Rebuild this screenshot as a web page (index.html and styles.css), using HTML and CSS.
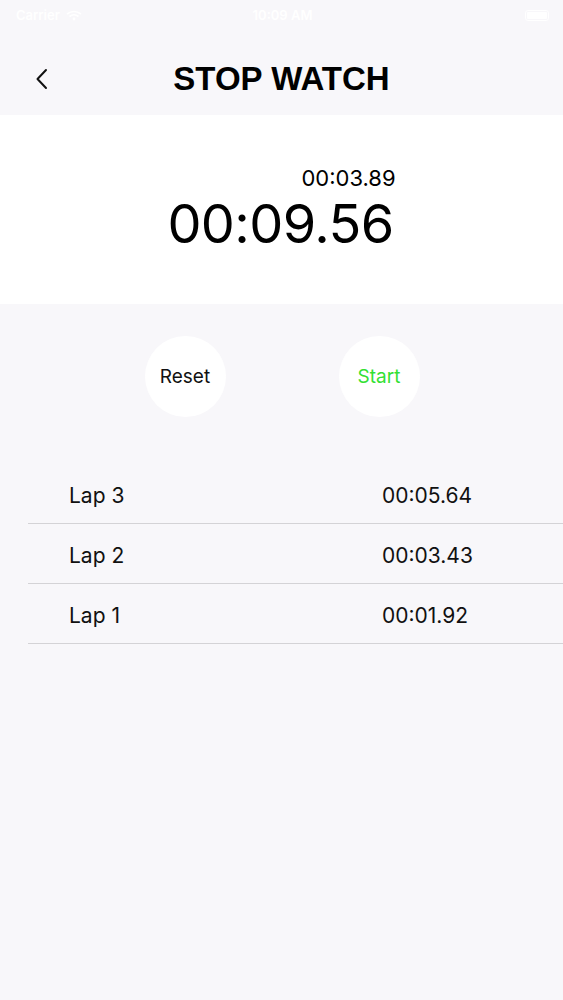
FILE: index.html
```html
<!DOCTYPE html>
<html>
<head>
<meta charset="utf-8">
<link rel="stylesheet" href="styles.css">
</head>
<body>
<div class="screen">
  <div class="status">
    <div class="status-left"><span>Carrier</span>
      <svg class="wifi" width="16" height="11" viewBox="0 0 16 11"><path d="M1 4 Q8 -1 15 4" stroke="#fff" stroke-width="1.6" fill="none"/><path d="M3.5 6.5 Q8 3 12.5 6.5" stroke="#fff" stroke-width="1.6" fill="none"/><circle cx="8" cy="9" r="1.4" fill="#fff"/></svg>
    </div>
    <div class="status-time">10:09 AM</div>
    <div class="battery"><div class="battery-fill"></div></div>
  </div>
  <header class="nav">
    <svg class="back" width="14" height="22" viewBox="0 0 14 22"><path d="M11 2 L2.5 11 L11 20" stroke="#111" stroke-width="2" fill="none" stroke-linecap="round" stroke-linejoin="round"/></svg>
    <h1 class="title">STOP WATCH</h1>
  </header>
  <section class="display">
    <div class="times">
      <div class="lap-time">00:03.89</div>
      <div class="main-time">00:09.56</div>
    </div>
  </section>
  <section class="controls">
    <button class="circle reset">Reset</button>
    <button class="circle start">Start</button>
  </section>
  <ul class="laps">
    <li class="lap"><span class="lap-name">Lap 3</span><span class="lap-value">00:05.64</span></li>
    <li class="lap"><span class="lap-name">Lap 2</span><span class="lap-value">00:03.43</span></li>
    <li class="lap"><span class="lap-name">Lap 1</span><span class="lap-value">00:01.92</span></li>
  </ul>
</div>
</body>
</html>
```
FILE: styles.css
```css
* { box-sizing: border-box; }
html, body { margin: 0; padding: 0; }
body {
  background: #f8f7fa;
  font-family: Inter, "Liberation Sans", sans-serif;
  color: #111;
}
.screen { width: 563px; min-height: 1000px; background: #f8f7fa; }
.status {
  height: 30px;
  display: flex;
  align-items: center;
  justify-content: space-between;
  padding: 0 14px 0 16px;
  color: #fff;
  font-size: 13px;
  font-weight: 600;
}
.status-left { display: flex; align-items: center; gap: 6px; width: 90px; }
.status-time { text-align: center; }
.battery {
  width: 24px; height: 11px; border: 1px solid #fff; border-radius: 3px; padding: 1px;
  margin-left: 66px;
}
.battery-fill { width: 100%; height: 100%; background: #fff; border-radius: 1px; }
.nav {
  height: 85px;
  display: flex;
  align-items: center;
  justify-content: center;
  position: relative;
  padding-top: 12px;
}
.back { position: absolute; left: 35px; top: 38px; }
.title {
  margin: 0;
  font-family: "Liberation Sans", Arial, sans-serif;
  font-weight: 700;
  font-size: 33px;
  letter-spacing: 0;
  color: #000;
  padding-left: 0;
}
.display {
  background: #fff;
  height: 189px;
  display: flex;
  justify-content: center;
  padding-top: 48px;
}
.times {
  display: flex;
  flex-direction: column;
  align-items: flex-end;
}
.lap-time {
  font-size: 22px;
  line-height: 30px;
  color: #000;
}
.main-time {
  font-size: 54px;
  line-height: 62px;
  letter-spacing: -0.6px;
  color: #000;
  margin-right: 2px;
}
.controls {
  display: flex;
  justify-content: center;
  gap: 113px;
  padding-top: 32px;
  height: 160px;
}
.circle {
  width: 81px;
  height: 81px;
  border-radius: 50%;
  border: none;
  background: #fff;
  font-family: Inter, "Liberation Sans", sans-serif;
  font-size: 19px;
  padding: 0;
}
.reset { color: #111; margin-left: 1px; }
.start { color: #33e033; }
.laps {
  list-style: none;
  margin: 0;
  padding: 0 0 0 28px;
}
.lap {
  height: 60px;
  display: flex;
  align-items: center;
  border-bottom: 1px solid #d4d3d6;
  font-size: 21px;
  padding-top: 4px;
}
.lap-name { width: 354px; padding-left: 41px; }
```
